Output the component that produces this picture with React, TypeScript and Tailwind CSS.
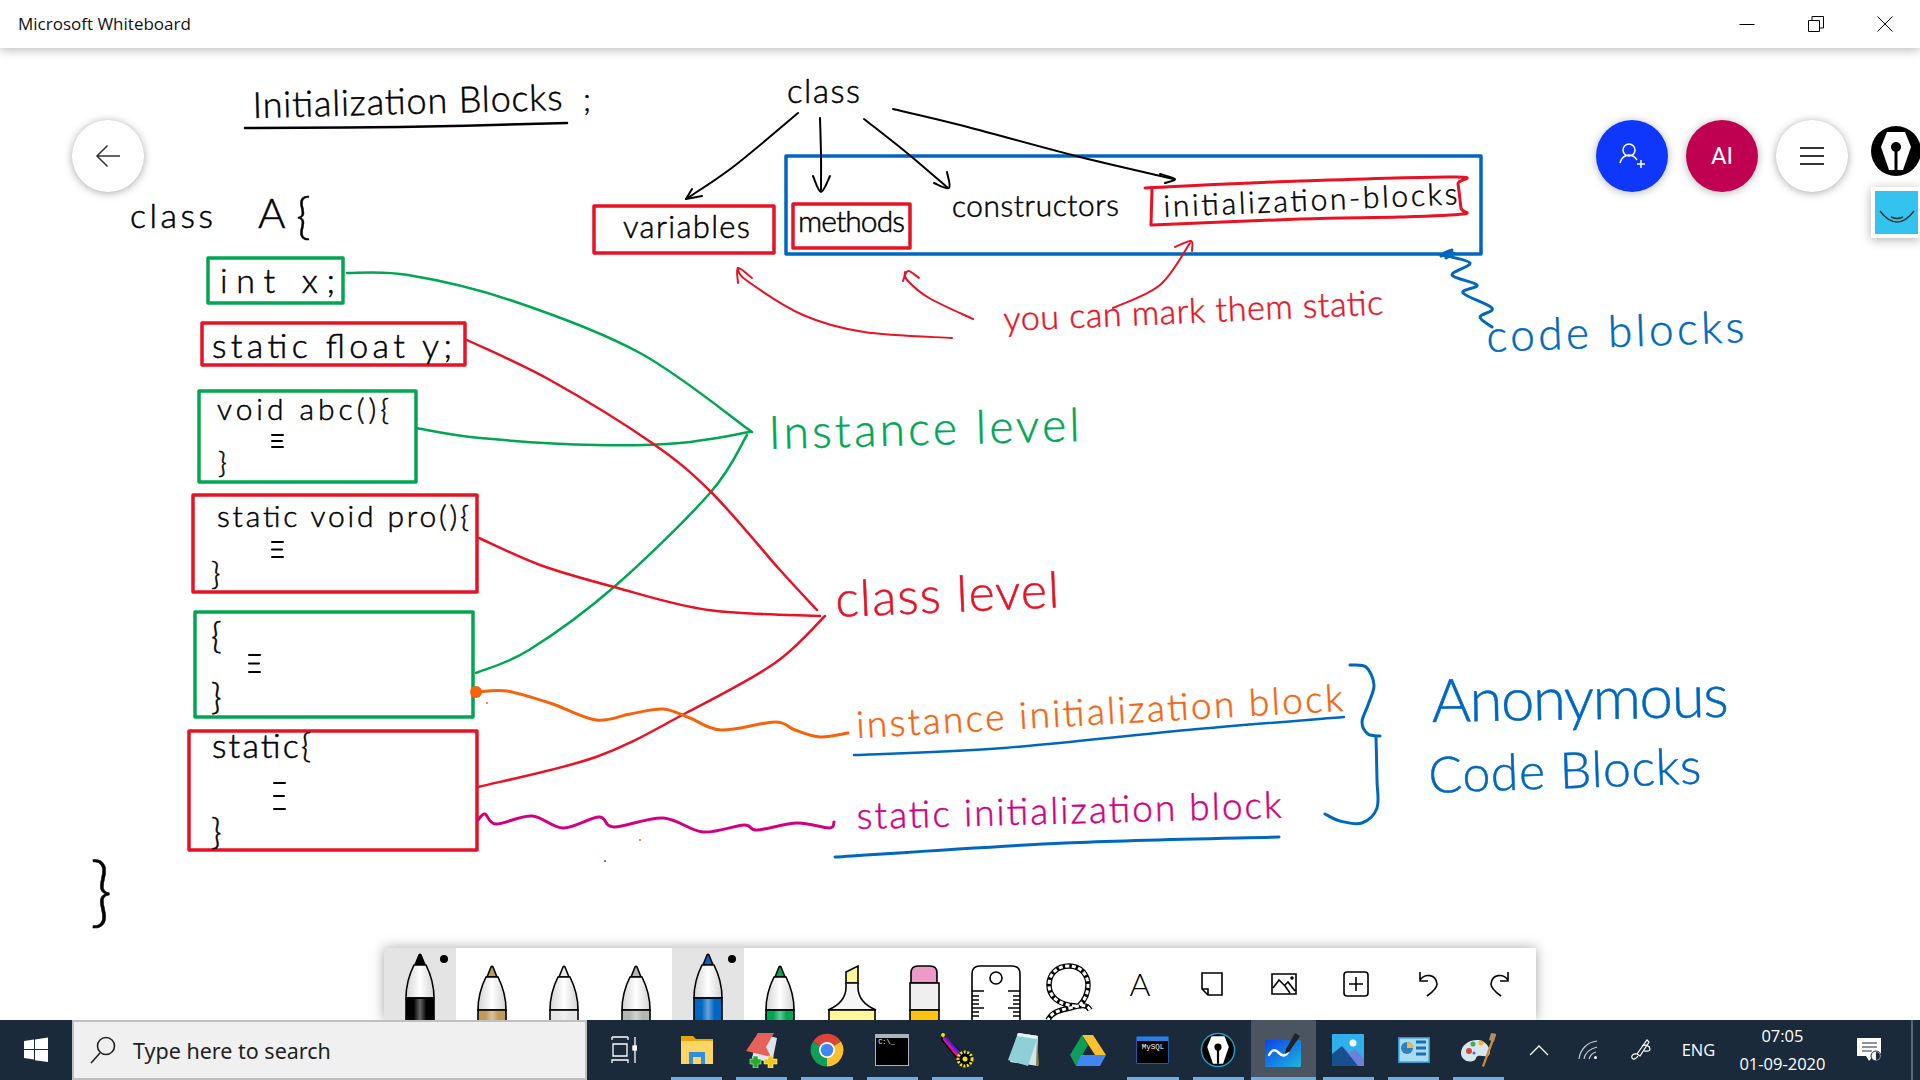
import { useId } from "react";

const RED = "#e81224";
const GREEN = "#00a651";
const BLUE = "#0067c0";
const ORANGE = "#f7630c";
const PINK = "#d1007f";
const INK = "#000000";

type Pt = [number, number];

// catmull-rom through the points, good enough for pen strokes
function smooth(p: Pt[]) {
  let d = `M${p[0][0]} ${p[0][1]}`;
  for (let i = 0; i < p.length - 1; i++) {
    const a = p[i - 1] || p[i];
    const b = p[i];
    const c = p[i + 1];
    const e = p[i + 2] || c;
    const c1x = b[0] + (c[0] - a[0]) / 6;
    const c1y = b[1] + (c[1] - a[1]) / 6;
    const c2x = c[0] - (e[0] - b[0]) / 6;
    const c2y = c[1] - (e[1] - b[1]) / 6;
    d += ` C${c1x.toFixed(1)} ${c1y.toFixed(1)} ${c2x.toFixed(1)} ${c2y.toFixed(1)} ${c[0]} ${c[1]}`;
  }
  return d;
}

const curves: { c: string; w: number; p: Pt[] }[] = [
  // black arrows from "class"
  { c: INK, w: 2, p: [[798, 113], [733, 167], [686, 199]] },
  { c: INK, w: 2, p: [[686, 199], [692, 189]] },
  { c: INK, w: 2, p: [[686, 199], [702, 196]] },
  { c: INK, w: 2, p: [[820, 118], [821, 155], [821, 190]] },
  { c: INK, w: 2, p: [[813, 176], [821, 192], [830, 176]] },
  { c: INK, w: 2, p: [[864, 119], [907, 153], [948, 188]] },
  { c: INK, w: 2, p: [[934, 183], [949, 188], [947, 172]] },
  { c: INK, w: 2, p: [[893, 109], [960, 125], [1080, 157], [1174, 179]] },
  { c: INK, w: 2, p: [[1160, 174], [1175, 179], [1165, 183]] },
  // underline of the heading
  { c: INK, w: 2.5, p: [[245, 128], [400, 127], [567, 123]] },
  // red arrows
  { c: RED, w: 2, p: [[952, 338], [864, 332], [803, 315], [746, 280], [738, 268]] },
  { c: RED, w: 2, p: [[738, 283], [738, 268], [752, 278]] },
  { c: RED, w: 2, p: [[973, 319], [929, 298], [907, 280], [905, 272]] },
  { c: RED, w: 2, p: [[903, 281], [908, 271], [919, 278]] },
  { c: RED, w: 2, p: [[1113, 308], [1160, 285], [1190, 243]] },
  { c: RED, w: 2, p: [[1175, 247], [1191, 241], [1192, 251]] },
  // init box drawn by hand
  { c: RED, w: 3, p: [[1145, 188], [1300, 181], [1455, 177], [1458, 184], [1461, 208], [1463, 214], [1400, 217], [1300, 219], [1152, 225]] },
  { c: RED, w: 3, p: [[1152, 188], [1151, 225]] },
  // instance level lines
  { c: GREEN, w: 2.5, p: [[347, 273], [408, 275], [510, 300], [640, 353], [752, 432]] },
  { c: GREEN, w: 2.5, p: [[416, 428], [480, 438], [596, 445], [680, 443], [750, 432]] },
  { c: GREEN, w: 2.5, p: [[476, 673], [529, 650], [614, 587], [710, 493], [747, 435]] },
  // class level lines
  { c: RED, w: 2.5, p: [[467, 340], [550, 380], [652, 443], [712, 493], [780, 570], [817, 610]] },
  { c: RED, w: 2.5, p: [[479, 538], [540, 565], [614, 587], [708, 610], [820, 616]] },
  { c: RED, w: 2.5, p: [[478, 787], [596, 757], [686, 713], [775, 663], [825, 616]] },
  // orange and magenta wavy lines
  { c: ORANGE, w: 3, p: [[478, 692], [507, 691], [550, 703], [596, 720], [630, 714], [663, 709], [690, 718], [721, 730], [775, 722], [795, 730], [820, 737], [848, 733]] },
  { c: PINK, w: 3, p: [[478, 820], [485, 814], [496, 824], [532, 816], [563, 828], [599, 817], [614, 827], [663, 818], [703, 832], [744, 825], [757, 830], [797, 823], [829, 828], [834, 822]] },
  // blue squiggle, brace, underlines
  { c: BLUE, w: 3, p: [[1442, 255], [1470, 263], [1452, 275], [1477, 285], [1463, 293], [1492, 308], [1480, 317], [1492, 327]] },
  { c: BLUE, w: 3, p: [[1441, 256], [1452, 250], [1443, 254], [1454, 253], [1446, 258]] },
  { c: BLUE, w: 2.5, p: [[854, 755], [1004, 748], [1187, 730], [1344, 717]] },
  { c: BLUE, w: 3, p: [[835, 857], [1065, 843], [1279, 837]] },
  { c: BLUE, w: 3, p: [[1350, 665], [1366, 667], [1374, 685], [1368, 705], [1362, 722], [1368, 734], [1380, 736]] },
  { c: BLUE, w: 3, p: [[1376, 737], [1377, 780], [1377, 808], [1362, 823], [1340, 821], [1325, 814]] },
];

const boxes: { c: string; x: number; y: number; w: number; h: number }[] = [
  { c: GREEN, x: 208, y: 258, w: 135, h: 45 },
  { c: RED, x: 202, y: 323, w: 263, h: 42 },
  { c: GREEN, x: 199, y: 391, w: 217, h: 91 },
  { c: RED, x: 193, y: 495, w: 284, h: 97 },
  { c: GREEN, x: 195, y: 612, w: 278, h: 105 },
  { c: RED, x: 189, y: 731, w: 288, h: 119 },
  { c: RED, x: 594, y: 206, w: 180, h: 47 },
  { c: BLUE, x: 786, y: 156, w: 695, h: 98 },
  { c: RED, x: 793, y: 204, w: 117, h: 44 },
];

// x, baseline y, width, size, rotation
const notes: { t: string; x: number; y: number; w: number; s: number; r?: number; c: string }[] = [
  { t: "Initialization Blocks", x: 253, y: 118, w: 310, s: 36, r: -1.5, c: INK },
  { t: ";", x: 583, y: 111, w: 8, s: 32, c: INK },
  { t: "class", x: 787, y: 103, w: 73, s: 33, c: INK },
  { t: "class", x: 130, y: 228, w: 83, s: 34, c: INK },
  { t: "A", x: 258, y: 228, w: 22, s: 42, c: INK },
  { t: "{", x: 296, y: 233, w: 16, s: 50, c: INK },
  { t: "int  x;", x: 220, y: 293, w: 115, s: 34, c: INK },
  { t: "static  float  y;", x: 212, y: 358, w: 240, s: 34, c: INK },
  { t: "void  abc(){", x: 217, y: 420, w: 172, s: 30, c: INK },
  { t: "}", x: 218, y: 473, w: 12, s: 30, c: INK },
  { t: "static  void  pro(){", x: 217, y: 527, w: 252, s: 30, c: INK },
  { t: "}", x: 211, y: 585, w: 12, s: 32, c: INK },
  { t: "{", x: 211, y: 648, w: 12, s: 36, c: INK },
  { t: "}", x: 211, y: 709, w: 12, s: 36, c: INK },
  { t: "static{", x: 212, y: 758, w: 99, s: 34, c: INK },
  { t: "}", x: 211, y: 844, w: 13, s: 36, c: INK },
  { t: "}", x: 90, y: 918, w: 18, s: 76, c: INK },
  { t: "variables", x: 623, y: 238, w: 127, s: 31, c: INK },
  { t: "methods", x: 798, y: 232, w: 107, s: 30, c: INK },
  { t: "constructors", x: 952, y: 217, w: 167, s: 30, r: -0.5, c: INK },
  { t: "initialization-blocks", x: 1164, y: 217, w: 294, s: 30, r: -2.5, c: INK },
  { t: "you can mark them static", x: 1004, y: 331, w: 380, s: 34, r: -2.5, c: RED },
  { t: "code  blocks", x: 1487, y: 352, w: 258, s: 44, r: -2.2, c: BLUE },
  { t: "Instance  level", x: 769, y: 449, w: 311, s: 46, r: -1.5, c: GREEN },
  { t: "class level", x: 836, y: 617, w: 224, s: 50, r: -2.5, c: RED },
  { t: "instance initialization block", x: 857, y: 738, w: 487, s: 37, r: -3.2, c: ORANGE },
  { t: "static initialization block", x: 857, y: 829, w: 425, s: 37, r: -1.5, c: PINK },
  { t: "Anonymous", x: 1432, y: 722, w: 297, s: 60, r: -1, c: BLUE },
  { t: "Code Blocks", x: 1429, y: 793, w: 273, s: 50, r: -2, c: BLUE },
];

// the handwritten "three bars" marks: x, top y, gap between bars
const bars: [number, number, number][] = [[277, 435, 6], [277, 542, 7.5], [254, 655, 8.5], [279, 783, 13]];

function Board() {
  return (
    <svg className="absolute inset-0 h-full w-full" viewBox="0 0 1920 1080" fill="none" strokeLinecap="round" strokeLinejoin="round">
      {boxes.map((b, i) => (
        <rect key={i} x={b.x} y={b.y} width={b.w} height={b.h} stroke={b.c} strokeWidth={3.5} />
      ))}
      {curves.map((s, i) => (
        <path key={i} d={smooth(s.p)} stroke={s.c} strokeWidth={s.w} />
      ))}
      {bars.map(([x, y, g], i) => (
        <path key={i} d={`M${x - 5} ${y}h11M${x - 5} ${y + g}h10M${x - 5} ${y + g * 2}h11`} stroke={INK} strokeWidth={2} />
      ))}
      <circle cx="476" cy="692" r="6" fill={ORANGE} />
      <circle cx="487" cy="703" r="1" fill={ORANGE} />
      <circle cx="640" cy="840" r="1" fill={ORANGE} />
      <circle cx="605" cy="861" r="1" fill={PINK} />
      <g className="font-['Lato',sans-serif] font-light">
        {notes.map((n, i) => (
          <text
            key={i}
            x={n.x}
            y={n.y}
            fontSize={n.s}
            textLength={n.w}
            lengthAdjust="spacing"
            fill={n.c}
            stroke={n.c}
            strokeWidth={0.5}
            transform={n.r ? `rotate(${n.r} ${n.x} ${n.y})` : undefined}
          >
            {n.t}
          </text>
        ))}
      </g>
    </svg>
  );
}

function TitleBar() {
  return (
    <div className="relative z-10 flex h-12 shrink-0 items-center justify-between bg-white pl-[18px] shadow-[0_2px_10px_rgba(0,0,0,0.28)]">
      <span className="font-['Open_Sans',sans-serif] text-[17px] text-[#111]">Microsoft Whiteboard</span>
      <div className="flex items-center">
        <div className="flex h-12 w-[69px] items-center justify-center">
          <svg width="16" height="16" viewBox="0 0 16 16" stroke="#000" fill="none">
            <path d="M0.5 8.5h15" />
          </svg>
        </div>
        <div className="flex h-12 w-[69px] items-center justify-center">
          <svg width="16" height="16" viewBox="0 0 16 16" stroke="#000" fill="none">
            <path d="M0.5 4.5h11v11h-11zM4 4V.5h11.5V12H12" />
          </svg>
        </div>
        <div className="flex h-12 w-[70px] items-center justify-center">
          <svg width="16" height="16" viewBox="0 0 16 16" stroke="#000" fill="none">
            <path d="M.5.5l15 15M15.5.5l-15 15" />
          </svg>
        </div>
      </div>
    </div>
  );
}

function Floating() {
  return (
    <>
      <button className="absolute left-[72px] top-[120px] flex h-[72px] w-[72px] items-center justify-center rounded-full bg-white shadow-[0_1px_8px_rgba(0,0,0,0.35)]">
        <svg width="26" height="24" viewBox="0 0 26 24" fill="none" stroke="#333" strokeWidth="1.5">
          <path d="M25 12H2M12.5 1.5L2 12l10.5 10.5" />
        </svg>
      </button>
      <button className="absolute left-[1596px] top-[120px] flex h-[72px] w-[72px] items-center justify-center rounded-full bg-[#0f37fb] shadow-[0_1px_8px_rgba(0,0,0,0.3)]">
        <svg width="28" height="28" viewBox="0 0 28 28" fill="none" stroke="#fff" strokeWidth="1.5">
          <circle cx="11" cy="8" r="6" />
          <path d="M2 21c1-5 5-8 9-8s6 2 8 5M19 22h8M23 18v8" />
        </svg>
      </button>
      <div className="absolute left-[1686px] top-[120px] flex h-[72px] w-[72px] items-center justify-center rounded-full bg-[#c00050] font-['Roboto',sans-serif] text-[24px] text-white shadow-[0_1px_8px_rgba(0,0,0,0.3)]">
        AI
      </div>
      <button className="absolute left-[1776px] top-[120px] flex h-[72px] w-[72px] flex-col items-center justify-center gap-[6px] rounded-full bg-white shadow-[0_1px_8px_rgba(0,0,0,0.35)]">
        <span className="h-[2px] w-6 bg-[#333]" />
        <span className="h-[2px] w-6 bg-[#333]" />
        <span className="h-[2px] w-6 bg-[#333]" />
      </button>
      <div className="absolute left-[1871px] top-[126px]">
        <NibBadge size={50} />
      </div>
      <div className="absolute left-[1871px] top-[187px] flex h-[51px] w-[49px] bg-white p-[4px] pr-[2px] shadow-[0_2px_10px_rgba(0,0,0,0.3)]">
        <div className="flex flex-1 items-end justify-center bg-[#33c3ee] pb-[10px]">
          <svg width="36" height="14" viewBox="0 0 36 14" fill="none" stroke="#333" strokeWidth="1.4">
            <path d="M1 1c6 8 12 11 17 11s11-3 17-11M12 7c4 2 8 2 12 0" />
          </svg>
        </div>
      </div>
    </>
  );
}

function NibBadge({ size, ring }: { size: number; ring?: boolean }) {
  return (
    <svg width={size} height={size} viewBox="0 0 50 50">
      <circle cx="25" cy="25" r={ring ? 23 : 25} fill="#000" stroke={ring ? "#1f9cc9" : "none"} strokeWidth="2" />
      <path d="M16 6h18l6 15-8 23H18L10 21z" fill="#fff" />
      <circle cx="25" cy="21" r="5" fill="#000" />
      <path d="M23.5 21h3v23h-3z" fill="#000" />
    </svg>
  );
}

function Pen({ tip, band, selected }: { tip: string; band: string; selected?: boolean }) {
  const id = useId();
  const dy = selected ? 0 : 12;
  return (
    <svg width="72" height="72" viewBox="0 0 72 72" className="block">
      <defs>
        <linearGradient id={id} x1="0" x2="1" y1="0" y2="0">
          <stop offset="0" stopColor="#d4d4d4" />
          <stop offset="0.5" stopColor="#ffffff" />
          <stop offset="1" stopColor="#d4d4d4" />
        </linearGradient>
        <linearGradient id={id + "b"} x1="0" x2="1" y1="0" y2="0">
          <stop offset="0.25" stopColor="#ffffff" stopOpacity="0" />
          <stop offset="0.5" stopColor="#ffffff" stopOpacity="0.4" />
          <stop offset="0.75" stopColor="#ffffff" stopOpacity="0" />
        </linearGradient>
      </defs>
      <g transform={`translate(0 ${dy})`} stroke="#000" strokeWidth="1.6">
        <path d="M31 17l4-10q1-1.500 2 0l4 10z" fill={tip} />
        <path d="M30 17C26 25 22 38 22 50H50C50 38 46 25 42 17z" fill={`url(#${id})`} />
        <rect x="22" y="50" width="28" height="34" fill={band} />
        <rect x="23" y="51" width="26" height="33" fill={`url(#${id}b)`} stroke="none" />
      </g>
    </svg>
  );
}

function ToolIcon({ name }: { name: string }) {
  const line = { fill: "none", stroke: "#000", strokeWidth: 1.6 };
  if (name === "highlighter")
    return (
      <svg width="72" height="72" viewBox="0 0 72 72" className="block" stroke="#000" strokeWidth="1.6">
        <path d="M30 35V24l12-6v17z" fill="#fff799" />
        <path d="M30 35h12v4c0 10 6 18 18 23H12c12-5 18-13 18-23z" fill="#f6f6f6" />
        <rect x="13" y="62" width="46" height="12" fill="#fff799" />
      </svg>
    );
  if (name === "eraser")
    return (
      <svg width="72" height="72" viewBox="0 0 72 72" className="block" stroke="#000" strokeWidth="1.6">
        <path d="M23 35V25q0-7 7-7h12q7 0 7 7v10z" fill="#ec9ac8" />
        <rect x="22" y="35" width="29" height="27" fill="#efefef" />
        <rect x="22" y="62" width="29" height="12" fill="#ffc20e" />
      </svg>
    );
  if (name === "ruler")
    return (
      <svg width="72" height="72" viewBox="0 0 72 72" className="block" {...line}>
        <path d="M12 74V26q0-8 8-8h32q8 0 8 8v48" />
        <circle cx="36" cy="30" r="6" />
        <path d="M12 43h12M12 48h7M12 52h7M12 56h7M12 60h12M12 64h7M12 68h7M60 43H48M60 48h-7M60 52h-7M60 56h-7M60 60H48M60 64h-7M60 68h-7" />
      </svg>
    );
  if (name === "lasso") {
    const rope = "M44 58C26 57 17 48 17 37 17 26 25 18 37 18 49 18 56 27 56 37 56 46 52 53 47 58M58 62C55 56 50 57 38 60 28 62 20 64 16 72";
    return (
      <svg width="72" height="72" viewBox="0 0 72 72" className="block" fill="none">
        <path d={rope} stroke="#000" strokeWidth="5.5" />
        <path d={rope} stroke="#fff" strokeWidth="3" strokeDasharray="4 2.500" />
      </svg>
    );
  }
  if (name === "text")
    return <span className="font-['Lato',sans-serif] text-[32px] font-light leading-none text-black">A</span>;
  if (name === "note")
    return (
      <svg width="24" height="26" viewBox="0 0 24 26" {...line}>
        <path d="M2 2h20v22H8L2 18zM2 18h6v6" />
      </svg>
    );
  if (name === "image")
    return (
      <svg width="26" height="22" viewBox="0 0 26 22" {...line}>
        <path d="M1 1h24v20H1zM2 15l6-8 6 6 5 7M13 13l4-4 7 9" />
        <circle cx="21" cy="5" r="1" />
      </svg>
    );
  if (name === "plus")
    return (
      <svg width="26" height="26" viewBox="0 0 26 26" {...line}>
        <rect x="1" y="1" width="24" height="24" rx="3" />
        <path d="M6 13h14M13 6v14" />
      </svg>
    );
  if (name === "undo")
    return (
      <svg width="22" height="26" viewBox="0 0 22 26" {...line}>
        <path d="M3 1v9h8M3 9c5-7 16-6 17 4 0 5-6 9-10 12" />
      </svg>
    );
  return (
    <svg width="22" height="26" viewBox="0 0 22 26" {...line}>
      <path d="M19 1v9h-8M19 9C14 2 3 3 2 13c0 5 6 9 10 12" />
    </svg>
  );
}

function Toolbar() {
  const pens = [
    { tip: "#000", band: "#000", selected: true, dot: true },
    { tip: "#c19a5b", band: "#c19a5b" },
    { tip: "#e6e6e6", band: "#e6e6e6" },
    { tip: "#b5b5b5", band: "#b5b5b5" },
    { tip: "#0067c0", band: "#0067c0", selected: true, dot: true },
    { tip: "#00a651", band: "#00a651" },
  ];
  const big = ["highlighter", "eraser", "ruler", "lasso"];
  const small = ["text", "note", "image", "plus", "undo", "redo"];
  return (
    <div className="absolute bottom-0 left-[384px] flex h-[72px] w-[1152px] overflow-hidden bg-white shadow-[0_0_12px_rgba(0,0,0,0.35)]">
      {pens.map((p, i) => (
        <div key={i} className={p.selected ? "relative h-[72px] w-[72px] bg-[#e4e4e4]" : "relative h-[72px] w-[72px]"}>
          <Pen tip={p.tip} band={p.band} selected={p.selected} />
          {p.dot && <span className="absolute right-[8px] top-[7px] h-2 w-2 rounded-full bg-black" />}
        </div>
      ))}
      {big.map((n) => (
        <div key={n} className="h-[72px] w-[72px]">
          <ToolIcon name={n} />
        </div>
      ))}
      {small.map((n) => (
        <div key={n} className="flex h-[72px] w-[72px] items-center justify-center">
          <ToolIcon name={n} />
        </div>
      ))}
    </div>
  );
}

function AppIcon({ name }: { name: string }) {
  switch (name) {
    case "folder":
      return (
        <svg width="34" height="32" viewBox="0 0 34 32">
          <path d="M1 2h12l3 3h17v6H1z" fill="#e5a50a" />
          <path d="M1 7h32v23H1z" fill="#ffd566" />
          <path d="M9 30V18h16v12h-4v-7h-8v7z" fill="#2f8fe0" />
        </svg>
      );
    case "notes":
      return (
        <svg width="36" height="36" viewBox="0 0 36 36">
          <path d="M14 1l19 5-5 25L8 26z" fill="#dbe5ea" />
          <path d="M14 1h16l-8 14 5 10-25-6z" fill="#e8605a" />
          <path d="M9 24h5v3h3v5h-3v4H9v-4H6v-5h3z" fill="#1fae2b" stroke="#fff" strokeWidth=".5" />
          <path d="M24 24h5v3h4v5h-4v4h-5v-4h-4v-5h4z" fill="#f2c81e" stroke="#fff" strokeWidth=".5" />
        </svg>
      );
    case "chrome":
      return (
        <svg width="34" height="34" viewBox="0 0 34 34">
          <path d="M17 17L3 8.500A16.500 16.500 0 0 1 31 8.500z" fill="#db4437" />
          <path d="M17 17L31 8.500A16.500 16.500 0 0 1 17 33.500z" fill="#fbc02d" />
          <path d="M17 17L17 33.500A16.500 16.500 0 0 1 3 8.500z" fill="#0f9d58" />
          <circle cx="17" cy="17" r="8" fill="#fff" />
          <circle cx="17" cy="17" r="6.300" fill="#4285f4" />
        </svg>
      );
    case "cmd":
      return (
        <div className="h-[32px] w-[34px] border border-[#a9b3bb] bg-black">
          <div className="h-[3px] bg-[#aab4bb]" />
          <div className="pl-[2px] font-['Liberation_Mono',monospace] text-[7px] leading-[9px] text-white">C:\_</div>
        </div>
      );
    case "feather":
      return (
        <svg width="34" height="36" viewBox="0 0 34 36">
          <path d="M2 2l24 24-6 4L2 8z" fill="#d6139a" stroke="#000" strokeWidth="1.5" />
          <path d="M5 5l17 19" stroke="#5b1bd6" strokeWidth="2.5" />
          <circle cx="3" cy="3" r="2" fill="#f5e50a" />
          <circle cx="25" cy="27" r="7" fill="#000" stroke="#f5e50a" strokeWidth="3" strokeDasharray="2 1.500" />
          <circle cx="25" cy="27" r="2.500" fill="#f5e50a" />
        </svg>
      );
    case "notepad":
      return (
        <svg width="34" height="36" viewBox="0 0 34 36">
          <path d="M12 1l20 3v30L4 30z" fill="#cfe6ea" />
          <path d="M12 1l20 3-10 30L2 28z" fill="#8fd0d8" />
          <path d="M12 1l20 3-1 3-20-3z" fill="#e9f4f6" />
          <path d="M31 5l2 28-3 1z" fill="#8a7a4a" />
        </svg>
      );
    case "drive":
      return (
        <svg width="36" height="32" viewBox="0 0 36 32">
          <path d="M12 1h11l13 20H25z" fill="#fbc02d" />
          <path d="M12 1l6 10L6 32 0 21z" fill="#0f9d58" />
          <path d="M11 21h25l-6 11H6z" fill="#4285f4" />
        </svg>
      );
    case "mysql":
      return (
        <div className="h-[28px] w-[33px] rounded-[1px] border border-[#1e5aa8] bg-black">
          <div className="h-[4px] bg-[#2b7fdc]" />
          <div className="text-center font-['Liberation_Mono',monospace] text-[7.500px] leading-[13px] text-white">MySQL</div>
        </div>
      );
    case "nib":
      return <NibBadge size={36} ring />;
    case "whiteboard":
      return (
        <svg width="36" height="34" viewBox="0 0 36 34">
          <defs>
            <linearGradient id="wbg" x1="0" y1="0" x2="1" y2="1">
              <stop offset="0" stopColor="#0b43f0" />
              <stop offset="1" stopColor="#1fb6d8" />
            </linearGradient>
          </defs>
          <rect x="0" y="7" width="36" height="27" rx="1.500" fill="url(#wbg)" />
          <path d="M4 22c4-7 7-5 10-2s6 4 9-1" fill="none" stroke="#fff" strokeWidth="2.500" strokeLinecap="round" />
          <path d="M30 0l5 3-11 16-4 2 1-5z" fill="#222" />
        </svg>
      );
    case "photos":
      return (
        <svg width="32" height="32" viewBox="0 0 32 32">
          <rect width="32" height="32" rx="1" fill="#2fb0ec" />
          <circle cx="21" cy="9" r="3.500" fill="#fff" />
          <path d="M0 22l10-9 8 6 5-4 9 10v7H0z" fill="#6d7fd8" />
          <path d="M0 20l10-8 16 20H0z" fill="#16508f" />
        </svg>
      );
    case "panel":
      return (
        <svg width="32" height="26" viewBox="0 0 32 26">
          <rect width="32" height="26" fill="#2f93c9" />
          <rect x="1.500" y="1.500" width="29" height="23" fill="#a9dcf3" />
          <circle cx="9" cy="11" r="6" fill="#2f7fc2" />
          <path d="M9 11V5a6 6 0 0 1 6 6z" fill="#f6b73c" />
          <path d="M18 5h10M18 11h10M18 17h10" stroke="#1c6fb0" strokeWidth="3" />
        </svg>
      );
    default:
      return (
        <svg width="36" height="36" viewBox="0 0 36 36">
          <path d="M16 8C7 8 0 14 0 21c0 6 6 10 12 8 4-1 2-4 5-5 4-1 8 2 11-1 3-4-2-15-12-15z" fill="#d8e4ee" />
          <circle cx="8" cy="19" r="3" fill="#d8453b" />
          <circle cx="12" cy="12" r="2.500" fill="#49a84c" />
          <circle cx="20" cy="11" r="2.500" fill="#f0b429" />
          <circle cx="13" cy="21" r="1.500" fill="#3b6fb8" />
          <path d="M33 1l2 2-12 32-2-1z" fill="#c98a3c" />
          <path d="M30 1l5 1-2 8-5-2z" fill="#b98a5a" />
        </svg>
      );
  }
}

function Taskbar() {
  const apps = [
    { n: "folder", on: true },
    { n: "notes", on: true },
    { n: "chrome", on: true },
    { n: "cmd", on: true },
    { n: "feather", on: true },
    { n: "notepad" },
    { n: "drive" },
    { n: "mysql", on: true },
    { n: "nib", on: true },
    { n: "whiteboard", on: true, active: true },
    { n: "photos", on: true },
    { n: "panel", on: true },
    { n: "paint", on: true },
  ];
  return (
    <div className="relative z-10 flex h-[60px] shrink-0 bg-[#1b2a3a] font-['Open_Sans',sans-serif] text-white">
      <div className="flex w-[72px] items-center justify-center">
        <svg width="26" height="26" viewBox="0 0 26 26" fill="#fff">
          <path d="M1 4l10-1.400V12H1zM12 2.400L25 .5V12H12zM1 13h10v9.400L1 21zM12 13h13v12l-13-1.800z" />
        </svg>
      </div>
      <div className="flex w-[515px] items-center border-2 border-[#c0c0c0] bg-[#f0f0f0] pl-[16px] text-[#222]">
        <svg width="26" height="28" viewBox="0 0 26 28" fill="none" stroke="#222" strokeWidth="1.6">
          <circle cx="16" cy="10" r="8.500" />
          <path d="M10 17L1 27" />
        </svg>
        <span className="ml-[17px] mt-[3px] font-['Noto_Sans',sans-serif] text-[21.500px]">Type here to search</span>
      </div>
      <div className="flex w-[77px] items-center justify-center pr-[4px]">
        <svg width="26" height="28" viewBox="0 0 26 28" fill="none" stroke="#fff" strokeWidth="1.300">
          <path d="M1 1h16M1 1v3M17 1v3M2 8h14v12H2zM1 27v-3h16v3M24 1v10M24 14v13" />
          <rect x="22" y="10" width="4" height="4" fill="#fff" />
        </svg>
      </div>
      {apps.map((a) => (
        <div key={a.n} className={a.active ? "relative flex w-[65.200px] items-center justify-center bg-[#4a5561]" : "relative flex w-[65.200px] items-center justify-center"}>
          <AppIcon name={a.n} />
          {a.on && (
            <span className={a.active ? "absolute inset-x-0 bottom-0 h-[3px] bg-[#6ab0e4]" : "absolute inset-x-[7px] bottom-0 h-[3px] bg-[#6ab0e4]"} />
          )}
        </div>
      ))}
      <div className="ml-[4px] flex w-[48px] items-center justify-center">
        <svg width="20" height="12" viewBox="0 0 20 12" fill="none" stroke="#fff" strokeWidth="1.300">
          <path d="M1 11l9-9 9 9" />
        </svg>
      </div>
      <div className="flex w-[50px] items-center justify-center">
        <svg width="20" height="20" viewBox="0 0 20 20" fill="none" stroke="#c9ced3" strokeWidth="1.200">
          <path d="M1 19C2 10 9 2 19 1M6 19c1-6 5-10 13-12M11 19c1-3 3-6 7-7" />
          <circle cx="17.500" cy="17.500" r="1.500" fill="#fff" stroke="none" />
        </svg>
      </div>
      <div className="flex w-[56px] items-center justify-center">
        <svg width="22" height="22" viewBox="0 0 22 22" fill="none" stroke="#fff" strokeWidth="1.200">
          <path d="M17 1l2 2-9 14-3-2zM12 7c4-2 8 0 8 3s-4 2-6 2M7 15c-4-1-6 2-5 4s4 1 6-2" />
        </svg>
      </div>
      <div className="flex w-[58px] items-center justify-center text-[16.500px]">ENG</div>
      <div className="flex w-[110px] flex-col items-center justify-center text-[16.500px] leading-[28px]">
        <span>07:05</span>
        <span>01-09-2020</span>
      </div>
      <div className="flex w-[64px] items-center justify-center">
        <svg width="26" height="26" viewBox="0 0 26 26">
          <path d="M1 1h24v18H17l-4 5-3-5H1z" fill="#fff" />
          <path d="M6 6h15M6 10h15M6 14h10" stroke="#1b2a3a" strokeWidth="1.200" />
          <circle cx="20" cy="19" r="5" fill="#fff" stroke="#1b2a3a" strokeWidth="1" />
          <path d="M20 15a4 4 0 0 1 0 8" fill="#1b2a3a" />
        </svg>
      </div>
      <div className="ml-[10px] w-[2px] bg-[#5b6a78]" />
    </div>
  );
}

export default function App() {
  return (
    <div className="relative flex h-screen w-full flex-col overflow-hidden bg-white">
      <Board />
      <TitleBar />
      <main className="relative flex-1">
        {/* floats are placed in page coords, so pull them up by the title bar */}
        <div className="absolute inset-x-0 -top-12 h-[1020px]">
          <Floating />
          <Toolbar />
        </div>
      </main>
      <Taskbar />
    </div>
  );
}
